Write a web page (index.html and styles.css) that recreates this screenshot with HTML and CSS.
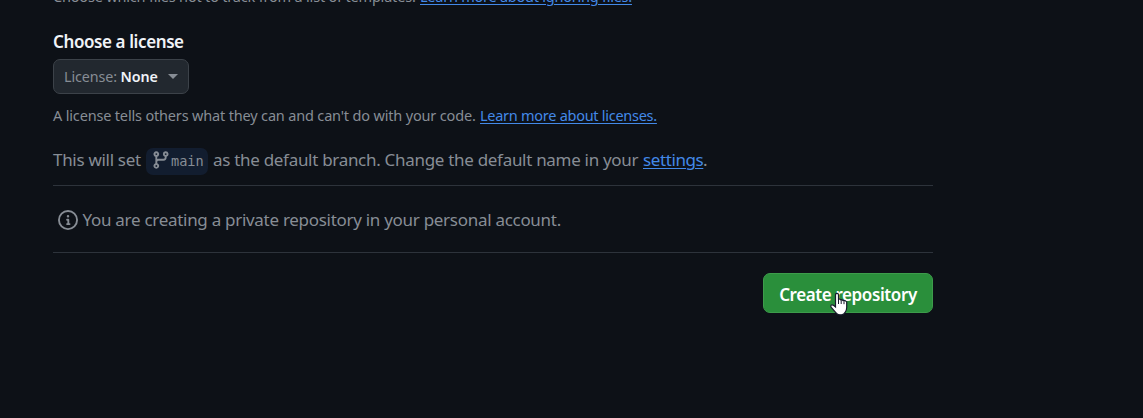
FILE: index.html
```html
<!DOCTYPE html>
<html lang="en">
<head>
<meta charset="utf-8">
<title>Create a new repository</title>
<link rel="stylesheet" href="styles.css">
</head>
<body>
<main class="form">
  <p class="note note-ignore"><span class="ignore-text">Choose which files not to track from a list of templates.</span><a class="link ignore-link" href="#">Learn more about ignoring files.</a></p>
  <h2 class="heading">Choose a license</h2>
  <button class="select" type="button"><span class="select-label">License:</span><span class="select-value">None</span><span class="caret"></span></button>
  <p class="note note-license"><span class="license-text">A license tells others what they can and can't do with your code.</span><a class="link license-link" href="#">Learn more about licenses.</a></p>
  <p class="branch"><span class="branch-start">This will set</span><span class="branch-name"><svg class="branch-icon" viewBox="0 0 16 16"><path d="M9.5 3.25a2.25 2.25 0 1 1 3 2.122V6A2.5 2.5 0 0 1 10 8.5H6a1 1 0 0 0-1 1v1.128a2.251 2.251 0 1 1-1.5 0V5.372a2.25 2.25 0 1 1 1.5 0v1.836A2.493 2.493 0 0 1 6 7h4a1 1 0 0 0 1-1v-.628A2.25 2.25 0 0 1 9.5 3.25Zm-6 0a.75.75 0 1 0 1.5 0 .75.75 0 0 0-1.5 0Zm8.25-.75a.75.75 0 1 0 0 1.5.75.75 0 0 0 0-1.5ZM4.25 12a.75.75 0 1 0 0 1.5.75.75 0 0 0 0-1.5Z"/></svg><code>main</code></span><span class="branch-end">as the default branch. Change the default name in your</span><a class="link settings" href="#">settings</a><span>.</span></p>
  <div class="info"><svg class="info-icon" viewBox="0 0 16 16"><path d="M0 8a8 8 0 1 1 16 0A8 8 0 0 1 0 8Zm8-6.5a6.5 6.5 0 1 0 0 13 6.5 6.5 0 0 0 0-13ZM6.5 7.75A.75.75 0 0 1 7.25 7h1a.75.75 0 0 1 .75.75v2.75h.25a.75.75 0 0 1 0 1.5h-2a.75.75 0 0 1 0-1.5h.25v-2h-.25a.75.75 0 0 1-.75-.75ZM8 6a1 1 0 1 1 0-2 1 1 0 0 1 0 2Z"/></svg><span class="info-text">You are creating a private repository in your personal account.</span></div>
  <div class="actions"><button class="create" type="button">Create repository</button></div>
</main>
<svg class="pointer" viewBox="0 0 18 24"><path d="M5.5 15V3.1Q5.5 1.3 7 1.3Q8.5 1.3 8.5 3.1V7.2Q9.7 6.6 10.6 7.8Q11.9 7.2 13 8.5Q15.1 8.1 16.7 9.8V15.5Q16.7 18 15.3 20Q14 22.8 11.5 22.8H9.7Q7.4 22.8 6 20.8L1.3 15.4Q.3 14 1.3 13.1Q2.4 12.4 3.8 13.5Z" fill="#fff" stroke="#171b2b" stroke-width="1.2"/><path d="M8.5 7V12M11.2 8V12M14 8.7V12.2" stroke="#171b2b" fill="none"/></svg>
</body>
</html>
```
FILE: styles.css
```css
* { box-sizing: border-box; }
body { margin: 0; height: 418px; overflow: hidden; background: #0d1117; color: #878d95; font-family: "Noto Sans", "Open Sans", sans-serif; }
p, h2 { margin: 0; white-space: nowrap; }
.form { width: 933px; padding-left: 53px; }
.link { color: #4389e8; text-decoration: underline; text-underline-offset: 2px; text-decoration-thickness: 1px; }
.note { display: flex; height: 22px; line-height: 22px; font-size: 14.5px; letter-spacing: -.17px; }
.note .link { letter-spacing: -.27px; }
.note-ignore { margin-top: -15px; }
.ignore-text { width: 367px; letter-spacing: -.19px; }
.note .ignore-link { letter-spacing: -.24px; }
.license-text { width: 427px; }
.heading { margin-top: 23px; height: 24px; line-height: 23px; font-size: 17px; font-weight: 600; letter-spacing: -.4px; color: #f0f3f8; }
.select { display: flex; align-items: center; width: 136px; height: 35px; margin-top: 5px; padding: 0 10px; border: 1px solid #3c4249; border-radius: 7px; background: #22282f; color: #878d95; font: 14.3px "Noto Sans", sans-serif; letter-spacing: -.1px; }
.select-label { width: 57px; text-align: left; }
.select-value { width: 48px; text-align: left; font-weight: 600; color: #f0f3f8; }
.caret { border: 5px solid transparent; border-top-color: #878d95; border-bottom: 0; }
.note-license { margin-top: 10px; }
.branch { display: flex; align-items: center; height: 40px; margin-top: 14px; line-height: 24px; font-size: 17px; letter-spacing: -.3px; }
.branch-start { width: 93px; }
.branch-name { display: flex; align-items: center; width: 62px; height: 27px; margin-top: 2px; margin-right: 5px; padding-left: 5px; border-radius: 7px; background: #121d2f; letter-spacing: 0; }
.branch-icon { width: 20px; height: 20px; margin-top: -3px; fill: currentColor; }
.branch-name code { font: 13.6px "DejaVu Sans Mono", monospace; }
.branch-end { width: 430px; }
.settings { width: 60px; letter-spacing: -.4px; }
.info { display: flex; align-items: center; height: 68px; margin-top: 5px; padding-left: 5px; border-top: 1px solid #2d333b; border-bottom: 1px solid #2d333b; font-size: 17px; letter-spacing: -.29px; white-space: nowrap; }
.info-icon { width: 20px; height: 20px; margin-top: 2px; margin-right: 4.5px; fill: currentColor; }
.actions { display: flex; justify-content: flex-end; margin-top: 20px; }
.create { width: 170px; height: 40px; padding: 2px 0 0; border: 1px solid #3d9c4b; border-radius: 7px; background: #2a8f3b; color: #fff; font: 600 17px "Noto Sans", sans-serif; letter-spacing: -.4px; white-space: nowrap; }
.pointer { position: absolute; left: 830px; top: 292px; width: 18px; height: 24px; }
```
